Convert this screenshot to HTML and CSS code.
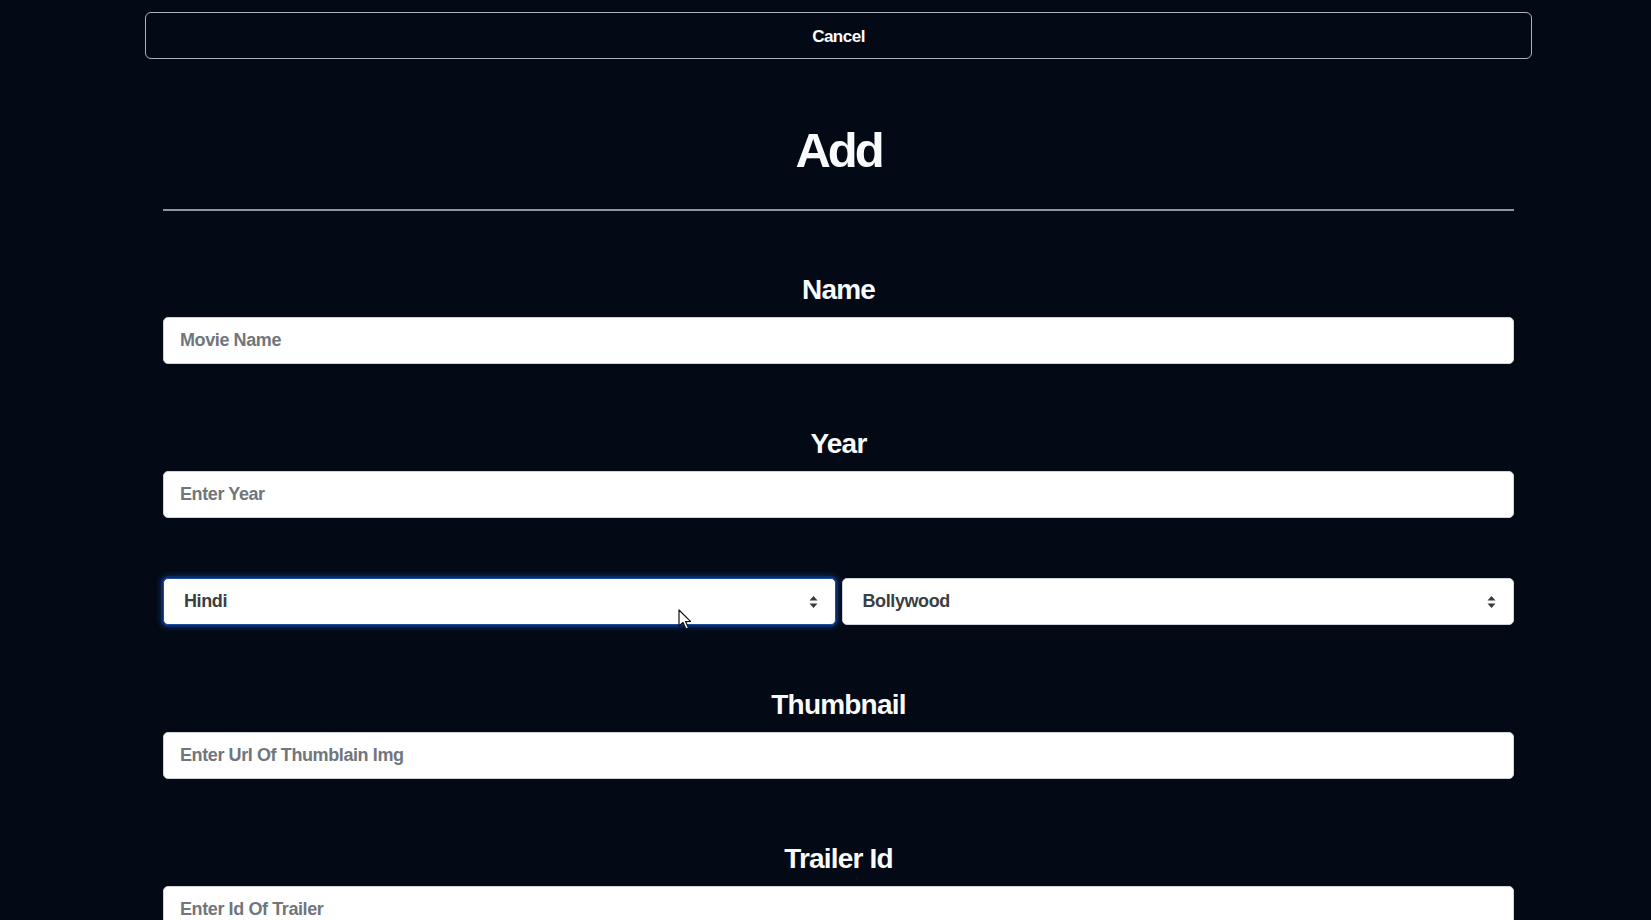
FILE: index.html
```html
<!DOCTYPE html>
<html lang="en">
<head>
<meta charset="utf-8">
<title>Add Movie</title>
<link rel="stylesheet" href="styles.css">
</head>
<body>
<div class="page">
  <button class="cancel" type="button">Cancel</button>
  <form class="form">
    <h1 class="title">Add</h1>
    <hr class="rule">
    <div class="group">
      <label class="label">Name</label>
      <input class="field" type="text" placeholder="Movie Name">
    </div>
    <div class="group">
      <label class="label">Year</label>
      <input class="field" type="text" placeholder="Enter Year">
    </div>
    <div class="group row">
      <div class="select focused">
        <span class="select-text">Hindi</span>
        <svg class="caret" width="9" height="14" viewBox="0 0 9 14"><path d="M4.5 1 L8.5 5.5 H0.5 Z M4.5 13 L0.5 8.5 H8.5 Z" fill="#3a3a3a"/></svg>
      </div>
      <div class="select">
        <span class="select-text">Bollywood</span>
        <svg class="caret" width="9" height="14" viewBox="0 0 9 14"><path d="M4.5 1 L8.5 5.5 H0.5 Z M4.5 13 L0.5 8.5 H8.5 Z" fill="#3a3a3a"/></svg>
      </div>
    </div>
    <div class="group">
      <label class="label">Thumbnail</label>
      <input class="field" type="text" placeholder="Enter Url Of Thumblain Img">
    </div>
    <div class="group">
      <label class="label">Trailer Id</label>
      <input class="field" type="text" placeholder="Enter Id Of Trailer">
    </div>
  </form>
</div>
<svg class="pointer" width="14" height="22" viewBox="0 0 14 22"><path d="M1 1 L1 17 L5 13.5 L8 20 L10.5 19 L7.6 12.6 L12.5 12.4 Z" fill="#ffffff" stroke="#111" stroke-width="1.2" stroke-linejoin="round"/></svg>
</body>
</html>
```

FILE: styles.css
```css
* { box-sizing: border-box; }

html, body {
  margin: 0;
  padding: 0;
  background: #030a15;
  height: 920px;
  overflow: hidden;
}

body {
  font-family: "Liberation Sans", Arial, sans-serif;
  color: #f5f7fa;
  position: relative;
}

.page {
  width: 1387px;
  margin-left: 145px;
  padding-top: 12px;
}

.cancel {
  display: block;
  width: 100%;
  height: 47px;
  background: transparent;
  border: 1.5px solid #aab3be;
  border-radius: 6px;
  color: #ffffff;
  font-family: inherit;
  font-size: 17px;
  letter-spacing: -0.5px;
  font-weight: 700;
  padding: 0;
  padding-top: 2px;
}

.form {
  margin: 0 18px;
  display: flex;
  flex-direction: column;
}

.title {
  margin: 61px 0 0;
  font-size: 49px;
  letter-spacing: -3px;
  line-height: 60px;
  font-weight: 700;
  text-align: center;
  color: #f8fafc;
}

.rule {
  margin: 29px 0 59px;
  border: 0;
  height: 2px;
  background: #8d96a0;
}

.group {
  display: flex;
  flex-direction: column;
  margin-bottom: 60px;
}

.label {
  display: block;
  text-align: center;
  font-size: 28px;
  letter-spacing: -0.8px;
  line-height: 40px;
  font-weight: 700;
  margin-bottom: 7px;
  color: #f8fafc;
}

.field {
  width: 100%;
  height: 47px;
  border: 1px solid #ced4da;
  border-radius: 5px;
  background: #ffffff;
  padding: 0 16px;
  font-family: inherit;
  font-size: 18px;
  letter-spacing: -0.4px;
  font-weight: 700;
  color: #212529;
  outline: none;
}

.field::placeholder {
  color: #70767c;
  opacity: 1;
}

.row {
  flex-direction: row;
  gap: 6px;
}

.select {
  flex: 1;
  height: 47px;
  background: #ffffff;
  border: 1px solid #ced4da;
  border-radius: 5px;
  display: flex;
  align-items: center;
  justify-content: space-between;
  padding: 0 17px 0 20px;
}

.select.focused {
  border: 1px solid #1d4c9c;
  box-shadow: 0 0 0 2px #0b2a66, 0 0 6px 2px rgba(30, 90, 200, 0.45);
}

.select-text {
  font-size: 18px;
  letter-spacing: -0.4px;
  font-weight: 700;
  color: #3b3e42;
}

.caret {
  display: block;
}

.pointer {
  position: absolute;
  left: 678px;
  top: 609px;
}
```
